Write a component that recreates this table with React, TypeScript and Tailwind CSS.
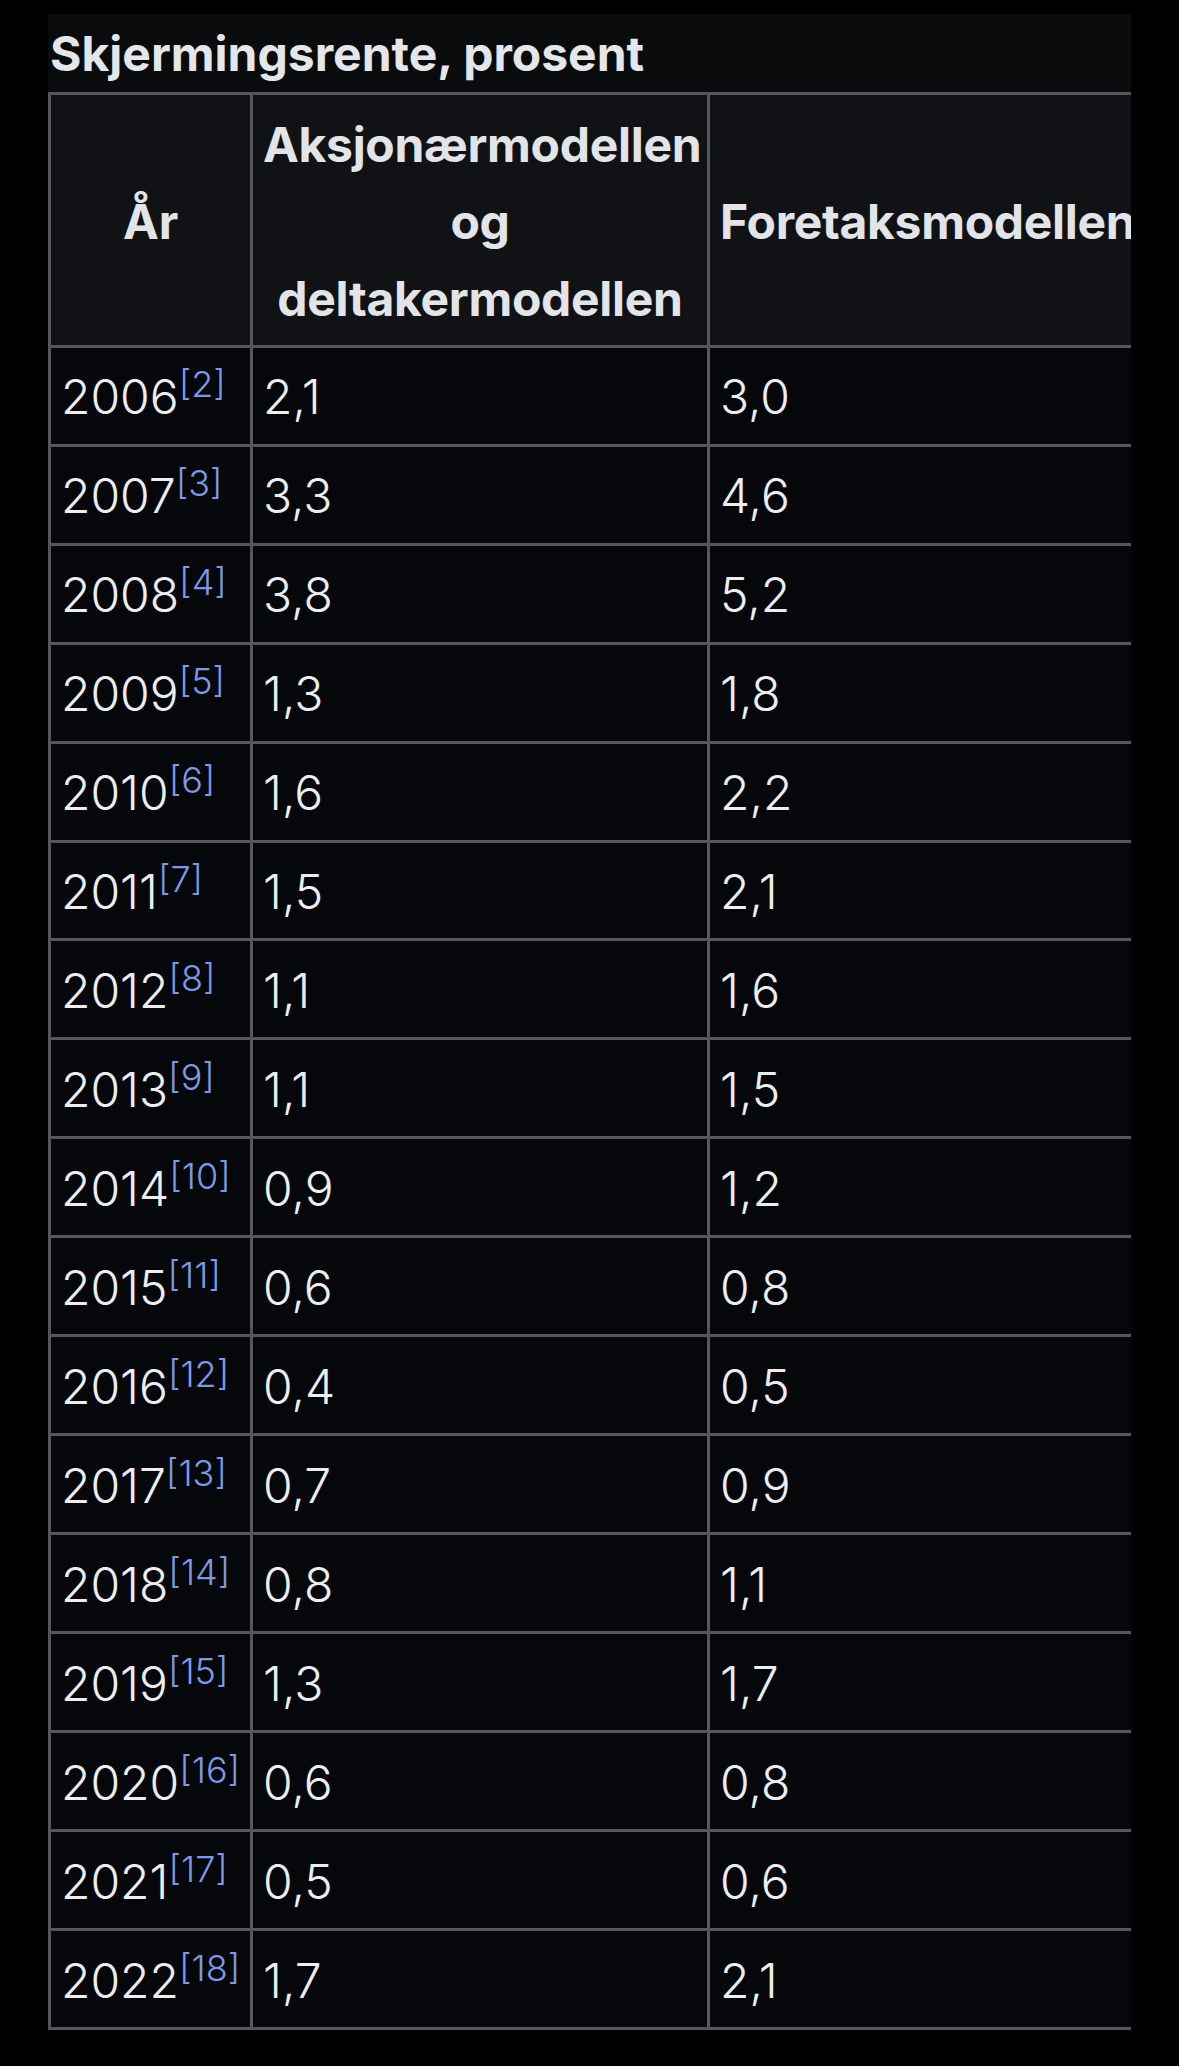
const rows: [string, string, string, string][] = [
  ["2006", "2", "2,1", "3,0"],
  ["2007", "3", "3,3", "4,6"],
  ["2008", "4", "3,8", "5,2"],
  ["2009", "5", "1,3", "1,8"],
  ["2010", "6", "1,6", "2,2"],
  ["2011", "7", "1,5", "2,1"],
  ["2012", "8", "1,1", "1,6"],
  ["2013", "9", "1,1", "1,5"],
  ["2014", "10", "0,9", "1,2"],
  ["2015", "11", "0,6", "0,8"],
  ["2016", "12", "0,4", "0,5"],
  ["2017", "13", "0,7", "0,9"],
  ["2018", "14", "0,8", "1,1"],
  ["2019", "15", "1,3", "1,7"],
  ["2020", "16", "0,6", "0,8"],
  ["2021", "17", "0,5", "0,6"],
  ["2022", "18", "1,7", "2,1"],
]

const th = "border-[3px] border-[#54585e] bg-[#101216] px-[10px] pt-[12px] pb-[7.2px] text-center align-middle font-bold tracking-[-0.3px] text-[#e2e4e8]"
const td = "border-[3px] border-[#54585e] bg-[#06070a] px-[10px] pt-[11.6px] pb-[7.6px] text-left align-middle font-light text-[#eceef1]"

export default function App() {
  return (
    <div className="min-h-[2066px] w-full bg-black pl-[48px] pt-[14px] font-['Inter','Roboto',sans-serif] text-[48px] leading-[76.8px]">
      <div className="w-[1083px] overflow-hidden bg-[#0a0b0d]">
        <div className="h-[78px] pl-[2px] pt-[2px] text-[48px] font-bold whitespace-nowrap text-[#e4e6ea]">
          Skjermingsrente, prosent
        </div>
        <table className="border-collapse table-fixed w-[1400px]">
          <colgroup>
            <col className="w-[202px]" />
            <col className="w-[457px]" />
            <col className="w-[741px]" />
          </colgroup>
          <thead>
            <tr>
              <th className={th}>År</th>
              <th className={th}>
                Aksjonærmodellen
                <br />
                og
                <br />
                deltakermodellen
              </th>
              <th className={th + " !text-left"}>Foretaksmodellen</th>
            </tr>
          </thead>
          <tbody>
            {rows.map(([year, ref, a, f]) => (
              <tr key={year}>
                <td className={td}>
                  <span className="whitespace-nowrap">
                    {year}
                    <sup className="relative -top-[17px] align-baseline text-[36px] leading-none text-[#7b9ae6]">
                      [{ref}]
                    </sup>
                  </span>
                </td>
                <td className={td}>{a}</td>
                <td className={td}>{f}</td>
              </tr>
            ))}
          </tbody>
        </table>
      </div>
    </div>
  )
}
